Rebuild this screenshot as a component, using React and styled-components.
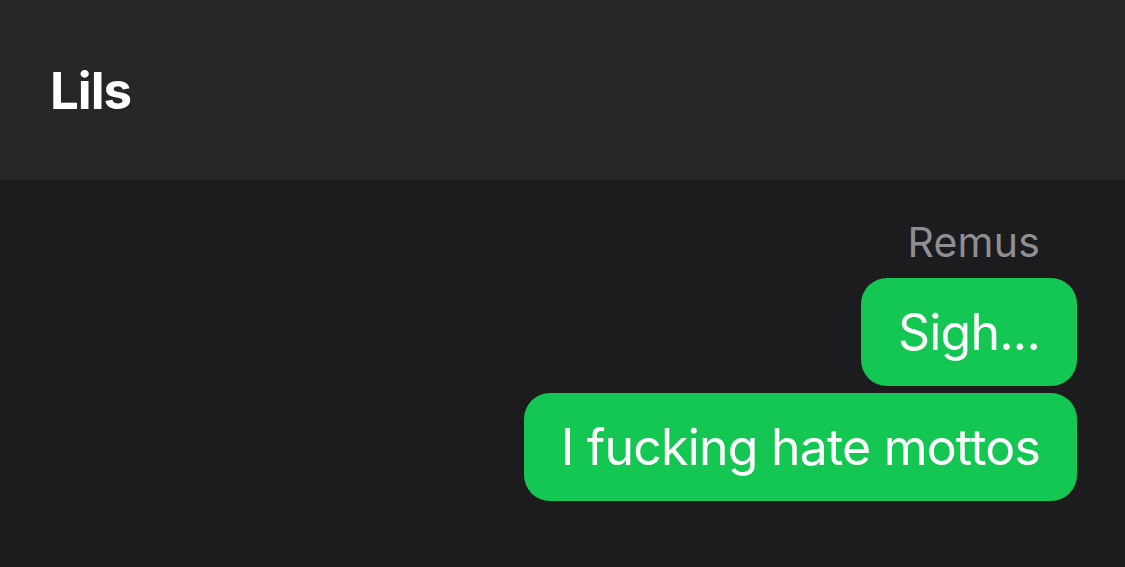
import React from 'react';
import styled, { createGlobalStyle } from 'styled-components';

const GlobalStyle = createGlobalStyle`
    html, body {
        margin: 0;
        padding: 0;
        background-color: #1c1c1e;
        font-family: 'Inter', 'Noto Sans', sans-serif;
    }
`

const Screen = styled.div`
    width: 1125px;
    height: 567px;
    display: flex;
    flex-direction: column;
    background-color: #1c1c1e;
    overflow: hidden;
`

const Header = styled.div`
    height: 180px;
    flex-shrink: 0;
    display: flex;
    align-items: center;
    padding-left: 50px;
    background-color: #262628;
`

const Title = styled.h1`
    margin: 0;
    color: #ffffff;
    font-size: 51px;
    font-weight: 700;
    letter-spacing: -1px;
`

const Thread = styled.div`
    display: flex;
    flex-direction: column;
    align-items: flex-end;
    padding: 38px 48px 0 0;
`

const Sender = styled.div`
    color: #8e8e93;
    font-size: 41px;
    line-height: 48px;
    letter-spacing: 0.2px;
    margin-right: 37px;
    margin-bottom: 12px;
`

const Bubble = styled.div`
    background-color: #13c752;
    color: #ffffff;
    font-size: 50px;
    letter-spacing: -0.8px;
    line-height: 108px;
    height: 108px;
    padding: 0 37px;
    border-radius: 26px;
    margin-bottom: ${props => props.gap || 0}px;
    white-space: nowrap;
`

const messages = [
    { text: 'Sigh...', gap: 7 },
    { text: 'I fucking hate mottos', gap: 0 },
]

const App = () => {
    return (
        <Screen>
            <GlobalStyle />
            <Header>
                <Title>Lils</Title>
            </Header>
            <Thread>
                <Sender>Remus</Sender>
                {messages.map(m => (
                    <Bubble key={m.text} gap={m.gap}>{m.text}</Bubble>
                ))}
            </Thread>
        </Screen>
    )
}

export default App;
